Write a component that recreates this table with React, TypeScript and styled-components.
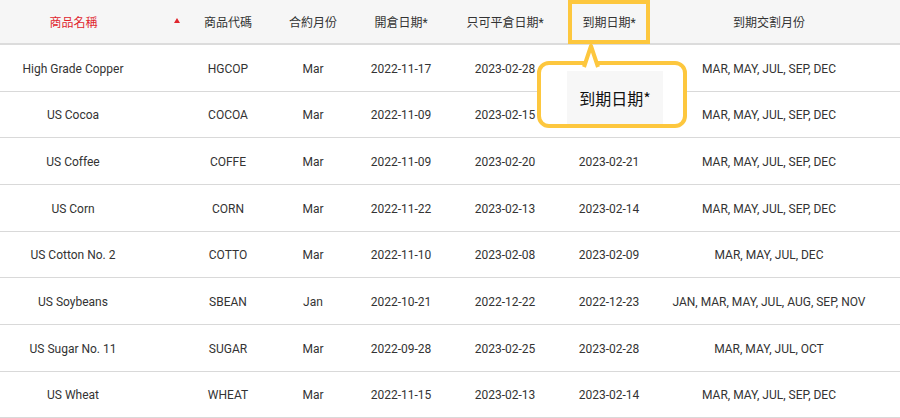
import React from "react";
import styled, { createGlobalStyle } from "styled-components";

const GlobalStyle = createGlobalStyle`
  html, body { margin: 0; padding: 0; background: #fff; }
  body { overflow: hidden; font-family: Roboto, "Noto Sans CJK TC", "Noto Sans", sans-serif; }
`;

const YELLOW = "#fdc73e";
const COLS = "190px 76px 94px 82px 126px 82px 1fr";

const Wrapper = styled.div`
  position: relative;
  width: 900px;
`;

const Table = styled.div`
  display: flex;
  flex-direction: column;
  width: 100%;
`;

const HeaderRow = styled.div`
  display: grid;
  grid-template-columns: ${COLS};
  height: 43px;
  background: #f6f6f6;
  border-bottom: 2px solid #dcdcdc;
`;

const HeadCell = styled.div<{ $padRight?: number }>`
  position: relative;
  display: flex;
  align-items: center;
  justify-content: center;
  font-size: 12px;
  color: #333;
  padding-right: ${(p) => p.$padRight ?? 0}px;
`;

const SortCell = styled.div`
  display: flex;
  align-items: center;
  padding-right: 10px;
`;

const SortLabel = styled.span`
  flex: 1;
  text-align: center;
  font-size: 12px;
  color: #e0262e;
`;

const SortArrow = styled.span`
  width: 0;
  height: 0;
  border-left: 3.5px solid transparent;
  border-right: 3.5px solid transparent;
  border-bottom: 5px solid #e0262e;
  margin-left: 27px;
  margin-bottom: 2px;
`;

const Highlight = styled.div`
  position: absolute;
  left: 0;
  right: 0;
  top: 0;
  bottom: -1px;
  border: 4px solid ${YELLOW};
  box-sizing: border-box;
`;

const Row = styled.div`
  display: grid;
  grid-template-columns: ${COLS};
  height: 45.67px;
  border-bottom: 1px solid #d9d9d9;
`;

const Cell = styled.div<{ $padRight?: number }>`
  display: flex;
  align-items: center;
  justify-content: center;
  font-size: 12px;
  color: #333;
  white-space: nowrap;
  padding-top: 2px;
  padding-right: ${(p) => p.$padRight ?? 0}px;
`;

const Callout = styled.div`
  position: absolute;
  left: 537px;
  top: 61px;
  width: 150px;
  height: 67px;
  box-sizing: border-box;
  border: 4px solid ${YELLOW};
  border-radius: 12px;
  background: #fff;
  padding: 6px 20px 0 26px;
  display: flex;
`;

const CalloutInner = styled.div`
  flex: 1;
  background: #f7f7f7;
  display: flex;
  align-items: center;
  justify-content: center;
  font-size: 16px;
  color: #111;
  font-family: "Noto Sans CJK TC", Roboto, sans-serif;
`;

const Pointer = styled.svg`
  position: absolute;
  left: 36px;
  top: -24px;
  overflow: visible;
`;

const rows = [
  ["High Grade Copper", "HGCOP", "Mar", "2022-11-17", "2023-02-28", "", "MAR, MAY, JUL, SEP, DEC"],
  ["US Cocoa", "COCOA", "Mar", "2022-11-09", "2023-02-15", "", "MAR, MAY, JUL, SEP, DEC"],
  ["US Coffee", "COFFE", "Mar", "2022-11-09", "2023-02-20", "2023-02-21", "MAR, MAY, JUL, SEP, DEC"],
  ["US Corn", "CORN", "Mar", "2022-11-22", "2023-02-13", "2023-02-14", "MAR, MAY, JUL, SEP, DEC"],
  ["US Cotton No. 2", "COTTO", "Mar", "2022-11-10", "2023-02-08", "2023-02-09", "MAR, MAY, JUL, DEC"],
  ["US Soybeans", "SBEAN", "Jan", "2022-10-21", "2022-12-22", "2022-12-23", "JAN, MAR, MAY, JUL, AUG, SEP, NOV"],
  ["US Sugar No. 11", "SUGAR", "Mar", "2022-09-28", "2023-02-25", "2023-02-28", "MAR, MAY, JUL, OCT"],
  ["US Wheat", "WHEAT", "Mar", "2022-11-15", "2023-02-13", "2023-02-14", "MAR, MAY, JUL, SEP, DEC"],
];

export default function App() {
  return (
    <>
      <GlobalStyle />
      <Wrapper>
        <Table>
          <HeaderRow>
            <SortCell>
              <SortLabel>商品名稱</SortLabel>
              <SortArrow />
            </SortCell>
            <HeadCell>商品代碼</HeadCell>
            <HeadCell>合約月份</HeadCell>
            <HeadCell>開倉日期*</HeadCell>
            <HeadCell>只可平倉日期*</HeadCell>
            <HeadCell>
              到期日期*
              <Highlight />
            </HeadCell>
            <HeadCell $padRight={12}>到期交割月份</HeadCell>
          </HeaderRow>
          {rows.map((r) => (
            <Row key={r[0]}>
              <Cell $padRight={44}>{r[0]}</Cell>
              <Cell>{r[1]}</Cell>
              <Cell>{r[2]}</Cell>
              <Cell>{r[3]}</Cell>
              <Cell>{r[4]}</Cell>
              <Cell>{r[5]}</Cell>
              <Cell $padRight={12}>{r[6]}</Cell>
            </Row>
          ))}
        </Table>
        <Callout>
          <Pointer width="28" height="28" viewBox="0 0 28 28">
            <path
              d="M7 26 L14 5 L21 26"
              fill="#fff"
              stroke={YELLOW}
              strokeWidth="4"
              strokeLinejoin="round"
            />
          </Pointer>
          <CalloutInner>到期日期*</CalloutInner>
        </Callout>
      </Wrapper>
    </>
  );
}
